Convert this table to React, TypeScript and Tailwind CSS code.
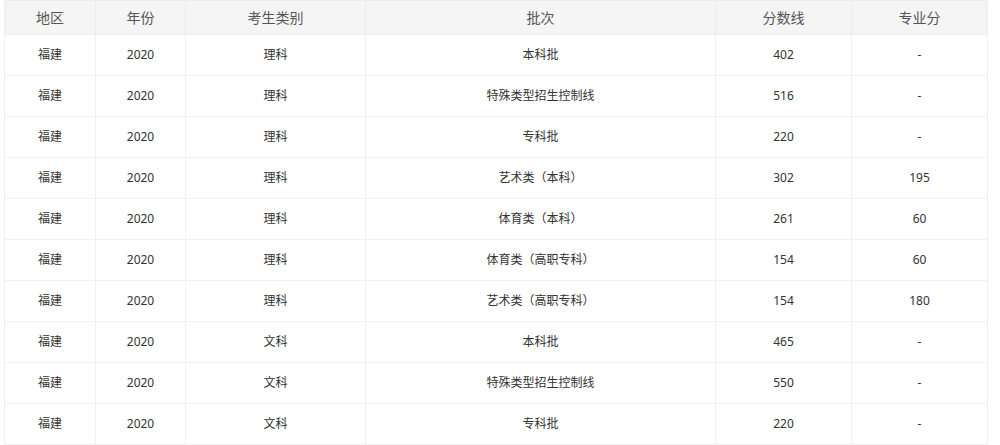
const rows: [string, string, string, string, string, string][] = [
  ["福建", "2020", "理科", "本科批", "402", "-"],
  ["福建", "2020", "理科", "特殊类型招生控制线", "516", "-"],
  ["福建", "2020", "理科", "专科批", "220", "-"],
  ["福建", "2020", "理科", "艺术类（本科）", "302", "195"],
  ["福建", "2020", "理科", "体育类（本科）", "261", "60"],
  ["福建", "2020", "理科", "体育类（高职专科）", "154", "60"],
  ["福建", "2020", "理科", "艺术类（高职专科）", "154", "180"],
  ["福建", "2020", "文科", "本科批", "465", "-"],
  ["福建", "2020", "文科", "特殊类型招生控制线", "550", "-"],
  ["福建", "2020", "文科", "专科批", "220", "-"],
];

const headers = ["地区", "年份", "考生类别", "批次", "分数线", "专业分"];
const widths = ["w-[91px]", "w-[90px]", "w-[180px]", "w-[350px]", "w-[136px]", "w-[136px]"];

export default function App() {
  return (
    <div className="w-[1000px] h-[445px] bg-white pl-1 overflow-hidden" style={{ fontFamily: '"Noto Sans", "Noto Sans CJK SC", sans-serif' }}>
      <table className="w-[983px] table-fixed border-collapse">
        <thead>
          <tr className="h-[34px] bg-[#f5f5f5]">
            {headers.map((h, i) => (
              <th key={h} className={`${widths[i]} border border-[#ececec] text-[14px] font-normal text-[#555] text-center`}>
                {h}
              </th>
            ))}
          </tr>
        </thead>
        <tbody>
          {rows.map((r, i) => (
            <tr key={i} className="h-[41px]">
              {r.map((c, j) => (
                <td key={j} className="border border-[#f0f0f0] text-[12px] text-[#333] text-center">
                  {c}
                </td>
              ))}
            </tr>
          ))}
        </tbody>
      </table>
    </div>
  );
}
